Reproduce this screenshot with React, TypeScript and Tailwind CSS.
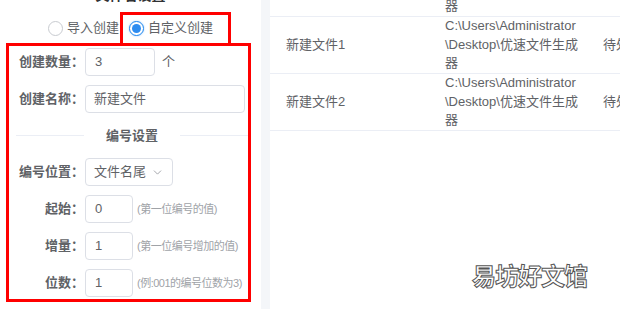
import { ChevronDown } from 'lucide-react';

const font = { fontFamily: '"Liberation Sans", "Noto Sans CJK SC", sans-serif' };

const fields = [
  { label: '起始：', value: '0', hint: '(第一位编号的值)' },
  { label: '增量：', value: '1', hint: '(第一位编号增加的值)' },
  { label: '位数：', value: '1', hint: '(例:001的编号位数为3)' },
];

const rows = [
  { name: '新建文件0', first: true },
  { name: '新建文件1', first: false },
  { name: '新建文件2', first: false },
];

function Label({ children }: { children: string }) {
  return (
    <span className="w-[76px] shrink-0 pr-[1px] text-right text-[13px] font-semibold text-[#606266]">
      {children}
    </span>
  );
}

function Radio({ checked, label }: { checked: boolean; label: string }) {
  return (
    <label className="flex items-center gap-[4px] text-[13px] text-[#606266]">
      {checked ? (
        <span className="flex h-[15px] w-[15px] items-center justify-center rounded-full border-[1.5px] border-[#1e87f0] bg-white shadow-[0_0_2px_#9ccaf7]">
          <span className="h-[9px] w-[9px] rounded-full bg-[#2d8cf0]" />
        </span>
      ) : (
        <span className="h-[15px] w-[15px] rounded-full border border-[#c8cbd0] bg-white" />
      )}
      {label}
    </label>
  );
}

export default function App() {
  return (
    <div className="relative flex h-[309px] w-[620px] overflow-hidden bg-white" style={font}>
      {/* left settings panel */}
      <div className="flex w-[261px] shrink-0 flex-col bg-white">
        <div className="-mt-[15px] h-[20px] text-center text-[14px] font-bold leading-[20px] text-[#303133]">
          文件名设置
        </div>
        <div className="mt-[13px] flex h-[20px] items-center justify-center gap-[10px]">
          <Radio checked={false} label="导入创建" />
          <Radio checked label="自定义创建" />
        </div>

        <div className="ml-[6px] mt-[5px] flex h-[259px] w-[245px] flex-col border-[3px] border-[#ff0000] pt-[2px]">
          <div className="flex h-[28px] items-center">
            <Label>创建数量：</Label>
            <div className="flex h-[28px] w-[70px] items-center rounded-[4px] border border-[#dcdfe6] pl-[9px] text-[13px] text-[#606266]">
              3
            </div>
            <span className="ml-[7px] text-[13px] text-[#606266]">个</span>
          </div>

          <div className="mt-[9px] flex h-[28px] items-center">
            <Label>创建名称：</Label>
            <div className="flex h-[28px] w-[160px] items-center rounded-[4px] border border-[#dcdfe6] pl-[8px] text-[13px] text-[#606266]">
              新建文件
            </div>
          </div>

          <div className="ml-[7px] flex h-[45px] items-center">
            <div className="h-px flex-1 bg-[#ebeef5]" />
            <span className="px-[22px] text-[13px] font-semibold text-[#606266]">编号设置</span>
            <div className="h-px flex-1 bg-[#ebeef5]" />
          </div>

          <div className="flex h-[28px] items-center">
            <Label>编号位置：</Label>
            <div className="flex h-[28px] w-[88px] items-center justify-between rounded-[4px] border border-[#dcdfe6] pl-[8px] pr-[8px] text-[13px] text-[#606266]">
              文件名尾
              <ChevronDown className="h-[13px] w-[13px] text-[#909399]" strokeWidth={1.5} />
            </div>
          </div>

          {fields.map((f) => (
            <div key={f.label} className="mt-[9px] flex h-[28px] items-center">
              <Label>{f.label}</Label>
              <div className="flex h-[28px] w-[48px] shrink-0 items-center rounded-[4px] border border-[#dcdfe6] pl-[9px] text-[13px] text-[#606266]">
                {f.value}
              </div>
              <span className="ml-[4px] whitespace-nowrap text-[11px] tracking-[-0.5px] text-[#a0a3a8]">
                {f.hint}
              </span>
            </div>
          ))}
        </div>
      </div>

      {/* gutter */}
      <div className="w-[9px] shrink-0 bg-[#f4f6f9]" />

      {/* right table */}
      <div className="flex min-w-0 flex-1 flex-col bg-white">
        {rows.map((r) => (
          <div
            key={r.name}
            className={`flex h-[57px] shrink-0 items-center border-b border-[#ebeef5] text-[13px] leading-[18.5px] text-[#606266] ${r.first ? '-mt-[40px]' : ''}`}
          >
            <div className="w-[175px] shrink-0 pl-[16px]">{r.name}</div>
            <div className="w-[158px] shrink-0">
              <div>C:\Users\Administrator</div>
              <div>\Desktop\优速文件生成</div>
              <div>器</div>
            </div>
            <div className="shrink-0 whitespace-nowrap">待处理</div>
          </div>
        ))}
      </div>

      {/* annotation box around the radio */}
      <div className="absolute left-[120px] top-[12px] h-[34px] w-[111px] border-[3px] border-[#ff0000]" />

      {/* watermark */}
      <div className="absolute left-[472px] top-[262px] text-[24px] font-bold leading-[30px] tracking-[-1px] text-white [-webkit-text-stroke:1px_#555]">
        易坊好文馆
      </div>
    </div>
  );
}
